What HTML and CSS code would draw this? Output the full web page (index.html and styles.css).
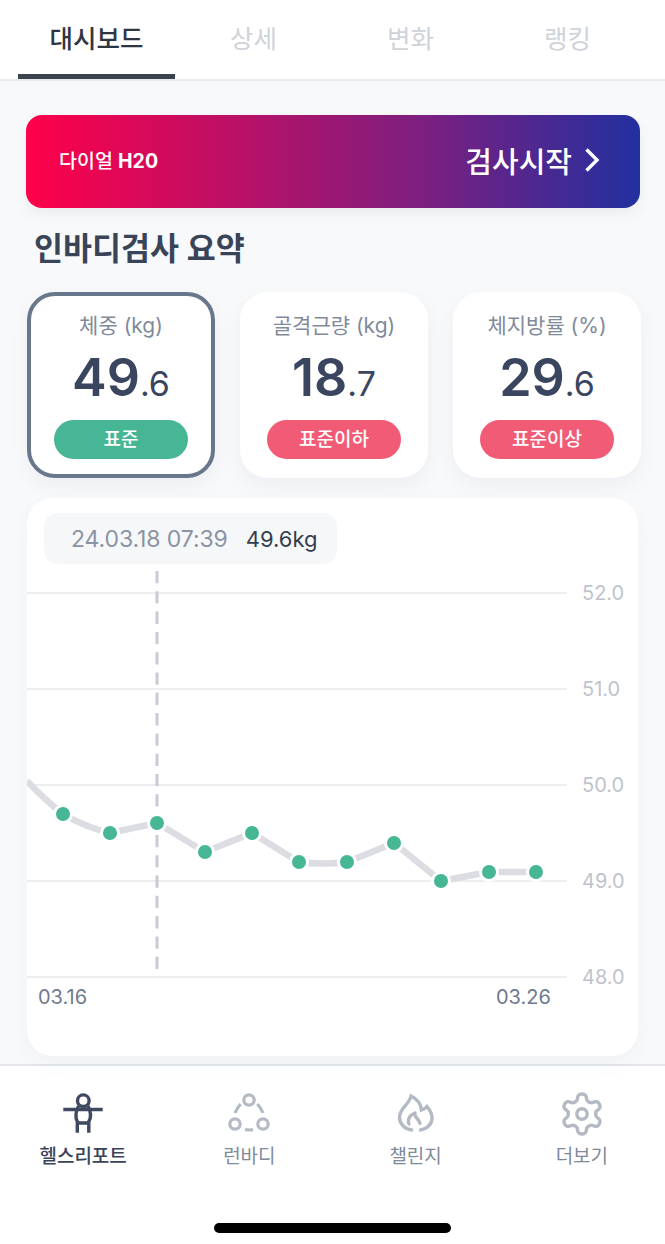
FILE: index.html
```html
<!DOCTYPE html>
<html lang="ko">
	<head>
		<meta charset="UTF-8">
		<title>헬스리포트</title>
		<link rel="stylesheet" href="styles.css">
	</head>
	<body>
		<div class="tabs">
			<div class="tab on">대시보드</div>
			<div class="tab">상세</div>
			<div class="tab">변화</div>
			<div class="tab">랭킹</div>
		</div>
		<div class="main">
			<div class="banner">
				<span class="banner-name">다이얼 <b>H20</b></span>
				<span class="banner-go">검사시작
					<svg width="16" height="26" viewBox="0 0 16 26"><path d="M2.5 2.5 L13 13 L2.5 23.5" fill="none" stroke="#fff" stroke-width="3.4"/></svg>
				</span>
			</div>
			<h2 class="title">인바디검사 요약</h2>
			<div class="cards">
				<div class="card sel">
					<p class="card-name">체중 (kg)</p>
					<p class="card-num">49<small>.6</small></p>
					<div class="pill green">표준</div>
				</div>
				<div class="card">
					<p class="card-name">골격근량 (kg)</p>
					<p class="card-num">18<small>.7</small></p>
					<div class="pill red">표준이하</div>
				</div>
				<div class="card">
					<p class="card-name">체지방률 (%)</p>
					<p class="card-num">29<small>.6</small></p>
					<div class="pill red">표준이상</div>
				</div>
			</div>
			<div class="chart">
				<div class="tip"><span class="tip-date">24.03.18 07:39</span><span class="tip-val">49.6kg</span></div>
				<svg class="plot" width="611" height="446" viewBox="27 570 611 446">
					<g stroke="#eceef1" stroke-width="2">
						<line x1="27" y1="592" x2="567" y2="592"/>
						<line x1="27" y1="688" x2="567" y2="688"/>
						<line x1="27" y1="784" x2="567" y2="784"/>
						<line x1="27" y1="880" x2="567" y2="880"/>
						<line x1="27" y1="976" x2="567" y2="976"/>
					</g>
					<line x1="157" y1="968" x2="157" y2="570" stroke="#c9cbd4" stroke-width="3" stroke-dasharray="12.3 8"/>
					<path d="M27 780 Q45 799 63 813 Q85 826 110 832 L157 822 L205 851 L252 832 L299 861 Q322 864 347 861 L394 842 L441 880 L489 871 L536 871" fill="none" stroke="#dcdde3" stroke-width="6.5"/>
					<g fill="#46b695" stroke="#fff" stroke-width="3">
						<circle cx="63" cy="813" r="8.5"/>
						<circle cx="110" cy="832" r="8.5"/>
						<circle cx="157" cy="822" r="8.5"/>
						<circle cx="205" cy="851" r="8.5"/>
						<circle cx="252" cy="832" r="8.5"/>
						<circle cx="299" cy="861" r="8.5"/>
						<circle cx="347" cy="861" r="8.5"/>
						<circle cx="394" cy="842" r="8.5"/>
						<circle cx="441" cy="880" r="8.5"/>
						<circle cx="489" cy="871" r="8.5"/>
						<circle cx="536" cy="871" r="8.5"/>
					</g>
					<g class="y-label">
						<text x="582" y="599">52.0</text>
						<text x="582" y="695">51.0</text>
						<text x="582" y="791">50.0</text>
						<text x="582" y="887">49.0</text>
						<text x="582" y="983">48.0</text>
					</g>
					<g class="x-label">
						<text x="38" y="1003">03.16</text>
						<text x="496" y="1003">03.26</text>
					</g>
				</svg>
			</div>
		</div>
		<div class="nav">
			<div class="nav-list">
				<div class="nav-item on">
					<svg width="44" height="44" viewBox="0 0 44 44" fill="none" stroke="#3f4a60" stroke-width="3.4">
						<circle cx="22.300" cy="8.700" r="5.800"/>
						<path d="M2.300 17.500 H41.700"/>
						<path d="M17.500 14 C14.500 20 14.500 26 16.300 29.500 V40.700 M27 14 C30 20 30 26 27.800 29.500 V40.700 M16.300 31 H27.800"/>
					</svg>
					<span>헬스리포트</span>
				</div>
				<div class="nav-item">
					<svg width="44" height="44" viewBox="0 0 44 44" fill="none" stroke="#b4bac4" stroke-width="3.2">
						<circle cx="22" cy="8" r="5.200"/>
						<circle cx="8" cy="32" r="5.200"/>
						<circle cx="36" cy="32" r="5.200"/>
						<path d="M8 21 Q10 16 13.700 12 M30.300 12 Q34 16 36 21 M18 37.500 Q22 38.500 26 37.500"/>
					</svg>
					<span>런바디</span>
				</div>
				<div class="nav-item">
					<svg width="44" height="44" viewBox="-2 -1 44 44" fill="none" stroke="#b4bac4" stroke-width="3.4" stroke-linecap="round">
						<path d="M15.700 37 C8 36 3.300 30 3.500 24 C3.800 15 13 12 15 3 C21 6 25 11 25.500 17 C27 16.500 29.500 15.500 31 13.500 C34 17 36.500 21 36 26 C35.500 32 30 36.500 24.500 37"/>
						<path d="M19 20 C14 22 11 26 13 31 M19 22 C20 25 23 27 24 30.300"/>
					</svg>
					<span>챌린지</span>
				</div>
				<div class="nav-item">
					<svg width="44" height="44" viewBox="1 1 22 22" fill="none" stroke="#b4bac4" stroke-width="1.700">
						<path d="M12.220 2h-.44a2 2 0 0 0-2 2v.18a2 2 0 0 1-1 1.730l-.43.25a2 2 0 0 1-2 0l-.15-.08a2 2 0 0 0-2.730.73l-.22.38a2 2 0 0 0 .73 2.730l.15.1a2 2 0 0 1 1 1.720v.51a2 2 0 0 1-1 1.740l-.15.09a2 2 0 0 0-.73 2.730l.22.38a2 2 0 0 0 2.730.73l.15-.08a2 2 0 0 1 2 0l.43.25a2 2 0 0 1 1 1.730V20a2 2 0 0 0 2 2h.44a2 2 0 0 0 2-2v-.18a2 2 0 0 1 1-1.730l.43-.25a2 2 0 0 1 2 0l.15.08a2 2 0 0 0 2.730-.73l.22-.39a2 2 0 0 0-.73-2.730l-.15-.08a2 2 0 0 1-1-1.740v-.5a2 2 0 0 1 1-1.740l.15-.09a2 2 0 0 0 .73-2.730l-.22-.38a2 2 0 0 0-2.730-.73l-.15.08a2 2 0 0 1-2 0l-.43-.25a2 2 0 0 1-1-1.730V4a2 2 0 0 0-2-2z"/>
						<circle cx="12" cy="12" r="2.600"/>
					</svg>
					<span>더보기</span>
				</div>
			</div>
			<div class="home-bar"></div>
		</div>
	</body>
</html>
```

FILE: styles.css
```css
*{
	margin:0;
	padding:0;
	box-sizing: border-box;
}
body{
	height: 1244px;
	overflow: hidden;
	background: #f8f9fb;
	font-family: Inter, "Noto Sans CJK KR", sans-serif;
	display: flex;
	flex-direction: column;
}
.tabs{
	height: 81px;
	padding: 0 18px;
	background: #fff;
	border-bottom: 2px solid #e8eaee;
	display: grid;
	grid-template-columns: repeat(4,157px);
}
.tab{
	height: 79px;
	padding-top: 19px;
	line-height: 40px;
	text-align: center;
	font-size: 25.500px;
	color: #cfd2d9;
}
.tab.on{
	color: #2f3642;
	font-weight: 500;
	border-bottom: 5px solid #3b434f;
}
.main{
	flex: 1;
	padding: 34px 25px 0 26px;
}
.banner{
	height: 93px;
	padding: 0 40px 4px 33px;
	border-radius: 16px;
	background: linear-gradient(90deg,#ff0049 0%,#7c1f80 65%,#22309f 100%);
	box-shadow: 0 6px 14px rgba(60,70,90,.07);
	color: #fff;
	display: flex;
	align-items: center;
	justify-content: space-between;
}
.banner-name{
	font-size: 19.500px;
	font-weight: 500;
}
.banner-name b{
	font-weight: 700;
}
.banner-go{
	font-size: 29px;
	font-weight: 500;
	display: flex;
	align-items: center;
	gap: 12px;
}
.title{
	margin: 18px 0 0 8px;
	height: 50px;
	line-height: 46px;
	font-size: 31.500px;
	font-weight: 600;
	color: #3a4458;
}
.cards{
	margin: 16px -1px 0 1px;
	display: grid;
	grid-template-columns: repeat(3,188px);
	column-gap: 25px;
}
.card{
	height: 186px;
	padding-top: 19px;
	background: #fff;
	border-radius: 28px;
	box-shadow: 0 8px 20px rgba(60,70,90,.06);
	text-align: center;
}
.card.sel{
	padding-top: 15px;
	border: 4px solid #68778c;
}
.card-name{
	line-height: 30px;
	font-size: 21px;
	color: #7f8a9b;
}
.card-num{
	margin-top: 5px;
	height: 64px;
	line-height: 64px;
	font-size: 52px;
	font-weight: 600;
	color: #3a4560;
}
.card-num small{
	font-size: 34px;
	font-weight: 400;
}
.pill{
	width: 134px;
	height: 39px;
	margin: 10px auto 0;
	border-radius: 20px;
	line-height: 39px;
	font-size: 19px;
	font-weight: 500;
	color: #fff;
}
.green{
	background: #46b695;
}
.red{
	background: #f25b76;
}
.chart{
	position: relative;
	width: 611px;
	height: 558px;
	margin: 20px 0 0 1px;
	padding: 15px 0 0 17px;
	background: #fff;
	border-radius: 26px;
	box-shadow: 0 8px 20px rgba(60,70,90,.04);
}
.tip{
	width: 293px;
	height: 51px;
	padding-left: 27px;
	border-radius: 14px;
	background: #f6f7f9;
	line-height: 53px;
	font-size: 22px;
	display: flex;
	gap: 18px;
}
.tip-date{
	font-size: 23px;
	letter-spacing: -.1px;
	color: #8a94a4;
}
.tip-val{
	color: #333d50;
}
.plot{
	position: absolute;
	left: 0;
	top: 73px;
}
.y-label{
	font-size: 20px;
	fill: #bfc3cb;
}
.x-label{
	font-size: 20px;
	fill: #6f7a8c;
}
.nav{
	height: 180px;
	background: #fff;
	border-top: 2px solid #e4e6eb;
}
.nav-list{
	padding-top: 26px;
	display: grid;
	grid-template-columns: repeat(4,1fr);
}
.nav-item{
	font-size: 19px;
	color: #7f8a9b;
	display: flex;
	flex-direction: column;
	align-items: center;
	gap: 5px;
}
.nav-item.on{
	color: #3a4458;
	font-weight: 500;
}
.home-bar{
	width: 237px;
	height: 10px;
	margin: 55px auto 0;
	border-radius: 5px;
	background: #000;
}
```
